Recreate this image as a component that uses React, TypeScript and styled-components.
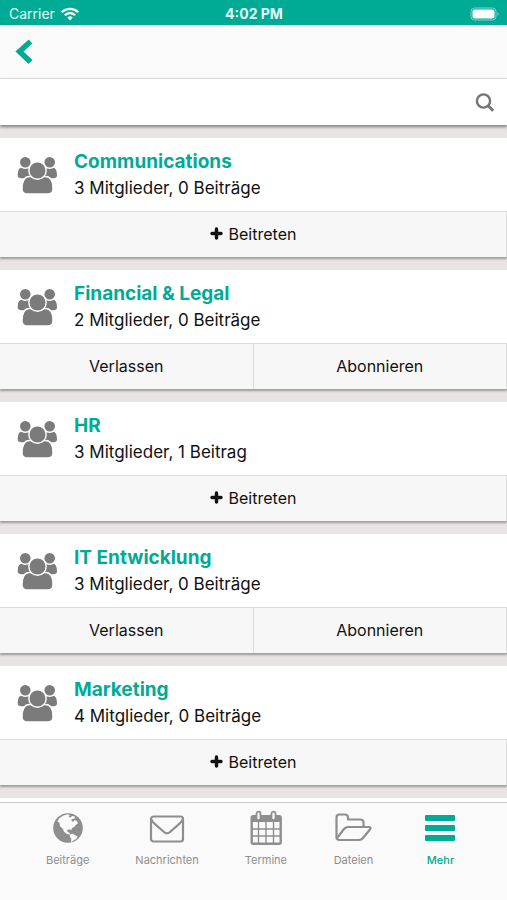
import React from "react";
import styled, { createGlobalStyle } from "styled-components";

const TEAL = "#00ab95";

const GlobalStyle = createGlobalStyle`
  * { box-sizing: border-box; }
  body { margin: 0; background: #e8e4e4; font-family: Inter, "Liberation Sans", sans-serif; color: #111; }
  button, input { font: inherit; color: inherit; }
`;

const Screen = styled.div`
  height: 100vh;
  display: flex;
  flex-direction: column;
  overflow: hidden;
`;

const StatusBar = styled.header`
  flex: none;
  height: 25px;
  padding: 2px 8px 0 9px;
  display: grid;
  grid-template-columns: 1fr auto 1fr;
  align-items: center;
  background: ${TEAL};
  color: #e6fbf8;
  font-size: 14px;
  line-height: 20px;
`;

const Carrier = styled.div`
  display: flex;
  align-items: center;
  gap: 6px;
`;

const Clock = styled.time`
  font-size: 14px;
  font-weight: 700;
`;

const BatteryIcon = styled.svg`
  justify-self: end;
`;

const NavBar = styled.nav`
  flex: none;
  height: 54px;
  padding: 0 12px;
  display: flex;
  align-items: center;
  background: #fafafa;
  border-bottom: 1px solid #dcdcdc;
`;

const IconButton = styled.button`
  display: flex;
  padding: 0;
  border: 0;
  background: none;
  cursor: pointer;
`;

const SearchBar = styled.form`
  flex: none;
  height: 46px;
  padding: 0 12px 0 16px;
  display: flex;
  align-items: center;
  background: #fff;
  box-shadow: 0 2px 3px rgba(0, 0, 0, 0.45);
`;

const SearchInput = styled.input`
  flex: 1;
  min-width: 0;
  height: 36px;
  border: 0;
  outline: 0;
  background: none;
  font-size: 17px;
`;

const GroupList = styled.main`
  flex: 1;
  min-height: 0;
  overflow: hidden;
  padding-top: 13px;
  display: flex;
  flex-direction: column;
  gap: 13px;
`;

const Card = styled.article`
  flex: none;
  background: #fff;
  box-shadow: 0 2px 2px rgba(0, 0, 0, 0.32);
`;

const CardHead = styled.div`
  height: 73px;
  padding: 0 16px;
  display: flex;
  align-items: center;
  gap: 16px;
`;

const GroupName = styled.h2`
  margin: 0;
  font-size: 19px;
  line-height: 26px;
  font-weight: 700;
  color: ${TEAL};
`;

const GroupMeta = styled.p`
  margin: 0;
  font-size: 17px;
  line-height: 26px;
`;

const CardActions = styled.div`
  display: flex;
  height: 46px;
  border-top: 1px solid #dcdcdc;
  background: #f7f7f7;
`;

const ActionButton = styled.button`
  flex: 1;
  display: flex;
  align-items: center;
  justify-content: center;
  gap: 6px;
  padding: 0 0 2px;
  border: 0;
  border-right: 1px solid #dcdcdc;
  background: none;
  font-size: 16px;
  cursor: pointer;
`;

const TabBar = styled.nav`
  flex: none;
  height: 98px;
  padding-top: 6px;
  display: flex;
  justify-content: space-evenly;
  align-items: flex-start;
  background: #fafafa;
  border-top: 1px solid #c8c8c8;
`;

const Tab = styled.a<{ $active?: boolean }>`
  min-width: 41px;
  display: flex;
  flex-direction: column;
  align-items: center;
  gap: 5px;
  font-size: 11px;
  line-height: 16px;
  font-weight: ${(p) => (p.$active ? 500 : 400)};
  color: ${(p) => (p.$active ? TEAL : "#8e8e8e")};
  text-decoration: none;
`;

const WifiIcon = () => (
  <svg width="18" height="14" viewBox="0 0 18 14" fill="none" stroke="#fff" strokeWidth="2.2" aria-hidden="true">
    <path d="M.8 5.2a11.6 11.6 0 0 1 16.4 0M3.8 8.2a7.4 7.4 0 0 1 10.4 0" />
    <path d="M9 13.4 6.3 10.6a3.8 3.8 0 0 1 5.4 0z" fill="#fff" stroke="none" />
  </svg>
);

const GroupIcon = () => (
  <svg width="42" height="42" viewBox="0 0 42 42" fill="#7b7b7b" stroke="#fff" strokeWidth="1.4" aria-hidden="true">
    <path d="M5.500 13C2.500 13 1 17 1 21.500 1 24 3 25 5.500 25H16V13z" />
    <path d="M37 13c3 0 4.700 4 4.700 8.500 0 2.500-2 3.500-4.500 3.500H27V13z" />
    <circle cx="9.300" cy="8.300" r="6" />
    <circle cx="33.700" cy="8.300" r="6" />
    <path d="M13.500 22.500c-5 0-7.500 5-7.500 12 0 3.300 2 5.400 5 5.400h21c3 0 5-2.100 5-5.400 0-7-2.500-12-7.500-12z" />
    <circle cx="21.500" cy="16.500" r="8.700" />
  </svg>
);

const PlusIcon = () => (
  <svg width="13" height="13" viewBox="0 0 13 13" aria-hidden="true">
    <path d="M6.500 2v9M2 6.500h9" stroke="#111" strokeWidth="3.400" strokeLinecap="round" />
  </svg>
);

const GlobeIcon = () => (
  <svg width="38" height="38" viewBox="0 0 38 38" aria-hidden="true">
    <circle cx="19" cy="19" r="14.800" fill="#8e8e8e" />
    <path
      fill="#fafafa"
      d="M8.300 12.500 10.500 9l4-2.500 4.500-1.300 2 1.300-1.500 1.300 1.800.8 2-1.600 2.700.6-.5 2.200-2.500.2-.8 1.800 2 1 1-1.500 2.500.5 1.300 2.500-2 1.500-1.500 2-2.500 1.200-.8 2.300-1.500-1-2.500.8.300 2 1.700.4.800 2-3-.5-3-2.300-1.200-3-2.800-2.500-.5-3.500z"
    />
    <path fill="#fafafa" d="M20.800 25.300 24 24.800l2 1.500 2.500 1-1 2.500-2.500 1.500-3 2 .3-3.500-1.500-2z" />
  </svg>
);

const EnvelopeIcon = () => (
  <svg width="38" height="38" viewBox="0 0 38 38" fill="none" stroke="#8e8e8e" strokeWidth="2.200" aria-hidden="true">
    <rect x="3" y="7.500" width="32" height="25" rx="2.500" />
    <path d="M3.500 10.500c.5 2 2 3.500 3.500 4.700l9 7.800c2.300 2 3.700 2 6 0l9-7.800c1.500-1.200 3-2.700 3.500-4.700" />
  </svg>
);

const CalendarIcon = () => (
  <svg width="38" height="38" viewBox="0 0 38 38" fill="none" stroke="#8e8e8e" aria-hidden="true">
    <rect x="4.700" y="7.200" width="29" height="27.500" rx="1.500" strokeWidth="2.400" />
    <path d="M4 7h30v6H4z" fill="#8e8e8e" stroke="none" />
    <path d="M11.500 13v21M19 13v21M26.500 13v21M4 20h30M4 27h30" strokeWidth="1.400" />
    <rect x="9.500" y="2.700" width="4" height="8.500" rx="2" fill="#fafafa" strokeWidth="1.800" />
    <rect x="24.500" y="2.700" width="4" height="8.500" rx="2" fill="#fafafa" strokeWidth="1.800" />
  </svg>
);

const FolderIcon = () => (
  <svg width="38" height="38" viewBox="0 0 38 38" fill="none" stroke="#8e8e8e" strokeWidth="2.200" strokeLinejoin="round" aria-hidden="true">
    <path d="M2.500 28.500V8.500a3 3 0 0 1 3-3h5.500a3 3 0 0 1 3 3v2h12.500a3 3 0 0 1 3 3V18" />
    <path d="M3 29 10 20q1.800-2 4-2h20.500q3 0 1.500 2.500l-7 8.500q-1.500 2-4 2H5.500q-3 0-3-3" />
  </svg>
);

const MenuIcon = () => (
  <svg width="38" height="38" viewBox="0 0 38 38" fill={TEAL} aria-hidden="true">
    <rect x="4" y="6" width="30" height="6" rx="1" />
    <rect x="4" y="16" width="30" height="6" rx="1" />
    <rect x="4" y="26" width="30" height="6" rx="1" />
  </svg>
);

const groups = [
  { name: "Communications", meta: "3 Mitglieder, 0 Beiträge", member: false },
  { name: "Financial & Legal", meta: "2 Mitglieder, 0 Beiträge", member: true },
  { name: "HR", meta: "3 Mitglieder, 1 Beitrag", member: false },
  { name: "IT Entwicklung", meta: "3 Mitglieder, 0 Beiträge", member: true },
  { name: "Marketing", meta: "4 Mitglieder, 0 Beiträge", member: false },
];

const tabs = [
  { label: "Beiträge", Icon: GlobeIcon },
  { label: "Nachrichten", Icon: EnvelopeIcon },
  { label: "Termine", Icon: CalendarIcon },
  { label: "Dateien", Icon: FolderIcon },
  { label: "Mehr", Icon: MenuIcon, active: true },
];

export default function App() {
  return (
    <Screen>
      <GlobalStyle />
      <StatusBar>
        <Carrier>
          Carrier
          <WifiIcon />
        </Carrier>
        <Clock>4:02 PM</Clock>
        <BatteryIcon width="30" height="14" viewBox="0 0 30 14" aria-hidden="true">
          <rect x="2" y="1" width="25" height="12" rx="3.500" fill="none" stroke="#7fd5ca" />
          <rect x="3.500" y="2.500" width="22" height="9" rx="2" fill="#fff" />
          <path d="M28.500 5q2 2 0 4z" fill="#7fd5ca" />
        </BatteryIcon>
      </StatusBar>
      <NavBar>
        <IconButton type="button" aria-label="Zurück">
          <svg width="26" height="30" viewBox="0 0 26 30" aria-hidden="true">
            <path d="M18.500 4.500 7.500 14.500l11 10.500" fill="none" stroke={TEAL} strokeWidth="5.500" />
          </svg>
        </IconButton>
      </NavBar>
      <SearchBar role="search" onSubmit={(e) => e.preventDefault()}>
        <SearchInput type="text" aria-label="Suche" />
        <IconButton type="submit" aria-label="Suchen">
          <svg width="20" height="20" viewBox="0 0 20 20" fill="none" stroke="#757575" aria-hidden="true">
            <circle cx="8.500" cy="9" r="6.600" strokeWidth="2.400" />
            <path d="m13.200 13.700 5 5" strokeWidth="3" />
          </svg>
        </IconButton>
      </SearchBar>
      <GroupList>
        {groups.map((group) => (
          <Card key={group.name}>
            <CardHead>
              <GroupIcon />
              <div>
                <GroupName>{group.name}</GroupName>
                <GroupMeta>{group.meta}</GroupMeta>
              </div>
            </CardHead>
            <CardActions>
              {group.member ? (
                <>
                  <ActionButton type="button">Verlassen</ActionButton>
                  <ActionButton type="button">Abonnieren</ActionButton>
                </>
              ) : (
                <ActionButton type="button">
                  <PlusIcon />
                  Beitreten
                </ActionButton>
              )}
            </CardActions>
          </Card>
        ))}
        <Card>
          <CardHead />
        </Card>
      </GroupList>
      <TabBar>
        {tabs.map(({ label, Icon, active }) => (
          <Tab key={label} href="#" $active={active}>
            <Icon />
            {label}
          </Tab>
        ))}
      </TabBar>
    </Screen>
  );
}
